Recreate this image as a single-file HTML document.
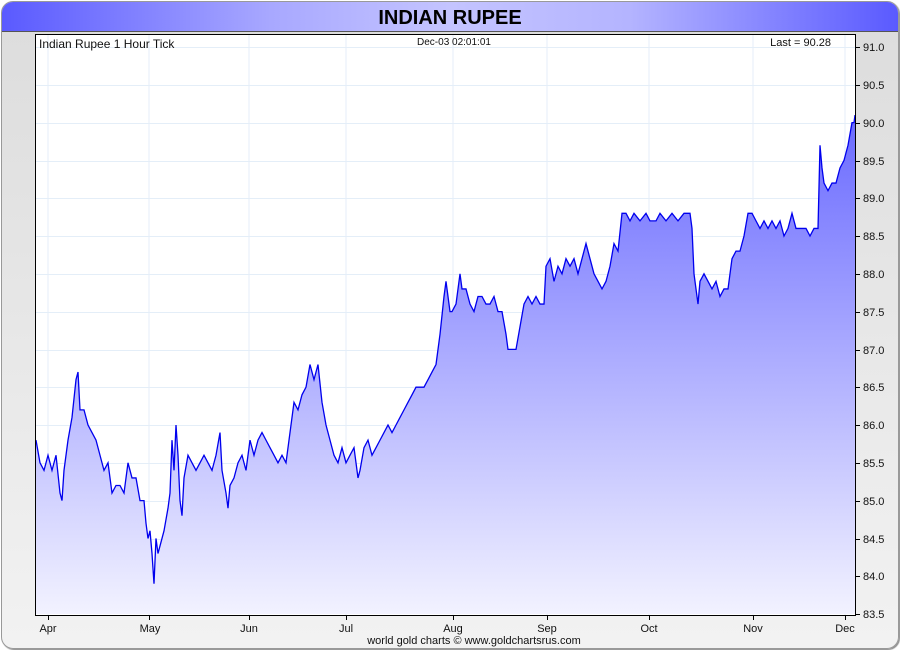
<!DOCTYPE html>
<html><head><meta charset="utf-8"><style>
html,body{margin:0;padding:0;width:900px;height:650px;overflow:hidden;background:#fff;font-family:"Liberation Sans",sans-serif}
.frame{position:absolute;left:1px;top:1px;width:896px;height:646px;border-radius:12px;background:linear-gradient(#dcdcdc,#f2f2f2);border:1px solid #999;box-shadow:1px 1px 1px #888;overflow:hidden}
.hdr{position:absolute;left:0;top:0;width:896px;height:29px;background:linear-gradient(90deg,#5a5aff 0%,#a8a8ff 30%,#c4c4ff 50%,#b4b4ff 70%,#5a5aff 100%);border-bottom:1px solid #555;text-align:center;font-weight:bold;font-size:20px;line-height:32px;color:#000}
svg{position:absolute;left:0;top:0}
</style></head><body>
<div class="frame"><div class="hdr">INDIAN RUPEE</div></div>
<svg width="900" height="650" font-family="Liberation Sans, sans-serif">
<defs><linearGradient id="g" x1="0" y1="0" x2="0" y2="1"><stop offset="0" stop-color="#f2f2ff"/><stop offset="1" stop-color="#6a6aff"/></linearGradient></defs>
<rect x="35.5" y="34.5" width="820" height="581" fill="#fff" stroke="#000"/>
<g stroke="#e4eef8" stroke-width="1">
<line x1="48" y1="35" x2="48" y2="615"/><line x1="149" y1="35" x2="149" y2="615"/><line x1="249" y1="35" x2="249" y2="615"/><line x1="346" y1="35" x2="346" y2="615"/><line x1="453" y1="35" x2="453" y2="615"/><line x1="547" y1="35" x2="547" y2="615"/><line x1="649" y1="35" x2="649" y2="615"/><line x1="753" y1="35" x2="753" y2="615"/><line x1="845" y1="35" x2="845" y2="615"/>
<line x1="36" y1="47.5" x2="855" y2="47.5"/><line x1="36" y1="85.5" x2="855" y2="85.5"/><line x1="36" y1="123.5" x2="855" y2="123.5"/><line x1="36" y1="161.5" x2="855" y2="161.5"/><line x1="36" y1="198.5" x2="855" y2="198.5"/><line x1="36" y1="236.5" x2="855" y2="236.5"/><line x1="36" y1="274.5" x2="855" y2="274.5"/><line x1="36" y1="312.5" x2="855" y2="312.5"/><line x1="36" y1="350.5" x2="855" y2="350.5"/><line x1="36" y1="387.5" x2="855" y2="387.5"/><line x1="36" y1="425.5" x2="855" y2="425.5"/><line x1="36" y1="463.5" x2="855" y2="463.5"/><line x1="36" y1="501.5" x2="855" y2="501.5"/><line x1="36" y1="539.5" x2="855" y2="539.5"/><line x1="36" y1="576.5" x2="855" y2="576.5"/>
</g>
<g transform="translate(0,47) scale(1,-75.6) translate(0,-91)">
<polyline fill="url(#g)" stroke="none" points="36,83.5 36,85.8 40,85.5 44,85.4 48,85.6 52,85.4 56,85.6 60,85.1 62,85.0 64,85.4 68,85.8 72,86.1 76,86.6 78,86.7 80,86.2 84,86.2 88,86.0 92,85.9 96,85.8 100,85.6 104,85.4 108,85.5 112,85.1 116,85.2 120,85.2 124,85.1 128,85.5 132,85.3 136,85.3 140,85.0 144,85.0 146,84.7 148,84.5 150,84.6 152,84.3 154,83.9 156,84.5 158,84.3 160,84.4 164,84.6 168,84.9 170,85.1 172,85.8 174,85.4 176,86.0 178,85.6 180,85.0 182,84.8 184,85.3 188,85.6 192,85.5 196,85.4 200,85.5 204,85.6 208,85.5 212,85.4 216,85.6 220,85.9 222,85.4 226,85.1 228,84.9 230,85.2 234,85.3 238,85.5 242,85.6 246,85.4 250,85.8 254,85.6 258,85.8 262,85.9 266,85.8 270,85.7 274,85.6 278,85.5 282,85.6 286,85.5 290,85.9 294,86.3 298,86.2 302,86.4 306,86.5 310,86.8 314,86.6 318,86.8 322,86.3 326,86.0 330,85.8 334,85.6 338,85.5 342,85.7 346,85.5 350,85.6 354,85.7 358,85.3 360,85.4 364,85.7 368,85.8 372,85.6 376,85.7 380,85.8 384,85.9 388,86.0 392,85.9 396,86.0 400,86.1 404,86.2 408,86.3 412,86.4 416,86.5 420,86.5 424,86.5 428,86.6 432,86.7 436,86.8 440,87.2 444,87.7 446,87.9 450,87.5 452,87.5 456,87.6 460,88.0 462,87.8 466,87.8 470,87.6 474,87.5 478,87.7 482,87.7 486,87.6 490,87.6 494,87.7 498,87.5 502,87.5 506,87.2 508,87.0 512,87.0 516,87.0 520,87.3 524,87.6 528,87.7 532,87.6 536,87.7 540,87.6 544,87.6 546,88.1 550,88.2 554,87.9 558,88.1 562,88.0 566,88.2 570,88.1 574,88.2 578,88.0 582,88.2 586,88.4 590,88.2 594,88.0 598,87.9 602,87.8 606,87.9 610,88.1 614,88.4 618,88.3 622,88.8 626,88.8 630,88.7 634,88.8 640,88.7 646,88.8 650,88.7 656,88.7 660,88.8 666,88.7 672,88.8 678,88.7 684,88.8 690,88.8 692,88.6 694,88.0 696,87.8 698,87.6 700,87.9 704,88.0 708,87.9 712,87.8 716,87.9 720,87.7 724,87.8 728,87.8 732,88.2 736,88.3 740,88.3 744,88.5 748,88.8 752,88.8 756,88.7 760,88.6 764,88.7 768,88.6 772,88.7 776,88.6 780,88.7 784,88.5 788,88.6 792,88.8 796,88.6 800,88.6 806,88.6 810,88.5 814,88.6 818,88.6 820,89.7 822,89.4 824,89.2 828,89.1 832,89.2 836,89.2 840,89.4 844,89.5 848,89.7 852,90.0 854,90.0 855,90.1 855,83.5"/>
<polyline fill="none" stroke="#0000ee" stroke-width="1.3" vector-effect="non-scaling-stroke" points="36,85.8 40,85.5 44,85.4 48,85.6 52,85.4 56,85.6 60,85.1 62,85.0 64,85.4 68,85.8 72,86.1 76,86.6 78,86.7 80,86.2 84,86.2 88,86.0 92,85.9 96,85.8 100,85.6 104,85.4 108,85.5 112,85.1 116,85.2 120,85.2 124,85.1 128,85.5 132,85.3 136,85.3 140,85.0 144,85.0 146,84.7 148,84.5 150,84.6 152,84.3 154,83.9 156,84.5 158,84.3 160,84.4 164,84.6 168,84.9 170,85.1 172,85.8 174,85.4 176,86.0 178,85.6 180,85.0 182,84.8 184,85.3 188,85.6 192,85.5 196,85.4 200,85.5 204,85.6 208,85.5 212,85.4 216,85.6 220,85.9 222,85.4 226,85.1 228,84.9 230,85.2 234,85.3 238,85.5 242,85.6 246,85.4 250,85.8 254,85.6 258,85.8 262,85.9 266,85.8 270,85.7 274,85.6 278,85.5 282,85.6 286,85.5 290,85.9 294,86.3 298,86.2 302,86.4 306,86.5 310,86.8 314,86.6 318,86.8 322,86.3 326,86.0 330,85.8 334,85.6 338,85.5 342,85.7 346,85.5 350,85.6 354,85.7 358,85.3 360,85.4 364,85.7 368,85.8 372,85.6 376,85.7 380,85.8 384,85.9 388,86.0 392,85.9 396,86.0 400,86.1 404,86.2 408,86.3 412,86.4 416,86.5 420,86.5 424,86.5 428,86.6 432,86.7 436,86.8 440,87.2 444,87.7 446,87.9 450,87.5 452,87.5 456,87.6 460,88.0 462,87.8 466,87.8 470,87.6 474,87.5 478,87.7 482,87.7 486,87.6 490,87.6 494,87.7 498,87.5 502,87.5 506,87.2 508,87.0 512,87.0 516,87.0 520,87.3 524,87.6 528,87.7 532,87.6 536,87.7 540,87.6 544,87.6 546,88.1 550,88.2 554,87.9 558,88.1 562,88.0 566,88.2 570,88.1 574,88.2 578,88.0 582,88.2 586,88.4 590,88.2 594,88.0 598,87.9 602,87.8 606,87.9 610,88.1 614,88.4 618,88.3 622,88.8 626,88.8 630,88.7 634,88.8 640,88.7 646,88.8 650,88.7 656,88.7 660,88.8 666,88.7 672,88.8 678,88.7 684,88.8 690,88.8 692,88.6 694,88.0 696,87.8 698,87.6 700,87.9 704,88.0 708,87.9 712,87.8 716,87.9 720,87.7 724,87.8 728,87.8 732,88.2 736,88.3 740,88.3 744,88.5 748,88.8 752,88.8 756,88.7 760,88.6 764,88.7 768,88.6 772,88.7 776,88.6 780,88.7 784,88.5 788,88.6 792,88.8 796,88.6 800,88.6 806,88.6 810,88.5 814,88.6 818,88.6 820,89.7 822,89.4 824,89.2 828,89.1 832,89.2 836,89.2 840,89.4 844,89.5 848,89.7 852,90.0 854,90.0 855,90.1"/>
</g>
<rect x="35.5" y="34.5" width="820" height="581" fill="none" stroke="#000"/>
<g stroke="#000"><line x1="855" y1="47.5" x2="860" y2="47.5"/><line x1="855" y1="85.5" x2="860" y2="85.5"/><line x1="855" y1="123.5" x2="860" y2="123.5"/><line x1="855" y1="161.5" x2="860" y2="161.5"/><line x1="855" y1="198.5" x2="860" y2="198.5"/><line x1="855" y1="236.5" x2="860" y2="236.5"/><line x1="855" y1="274.5" x2="860" y2="274.5"/><line x1="855" y1="312.5" x2="860" y2="312.5"/><line x1="855" y1="350.5" x2="860" y2="350.5"/><line x1="855" y1="387.5" x2="860" y2="387.5"/><line x1="855" y1="425.5" x2="860" y2="425.5"/><line x1="855" y1="463.5" x2="860" y2="463.5"/><line x1="855" y1="501.5" x2="860" y2="501.5"/><line x1="855" y1="539.5" x2="860" y2="539.5"/><line x1="855" y1="576.5" x2="860" y2="576.5"/><line x1="855" y1="614.5" x2="860" y2="614.5"/>
<line x1="48.5" y1="615" x2="48.5" y2="620"/><line x1="149.5" y1="615" x2="149.5" y2="620"/><line x1="249.5" y1="615" x2="249.5" y2="620"/><line x1="346.5" y1="615" x2="346.5" y2="620"/><line x1="453.5" y1="615" x2="453.5" y2="620"/><line x1="547.5" y1="615" x2="547.5" y2="620"/><line x1="649.5" y1="615" x2="649.5" y2="620"/><line x1="753.5" y1="615" x2="753.5" y2="620"/><line x1="845.5" y1="615" x2="845.5" y2="620"/></g>
<g font-size="11" fill="#111">
<text x="863" y="51">91.0</text><text x="863" y="89">90.5</text><text x="863" y="127">90.0</text><text x="863" y="165">89.5</text><text x="863" y="202">89.0</text><text x="863" y="240">88.5</text><text x="863" y="278">88.0</text><text x="863" y="316">87.5</text><text x="863" y="354">87.0</text><text x="863" y="391">86.5</text><text x="863" y="429">86.0</text><text x="863" y="467">85.5</text><text x="863" y="505">85.0</text><text x="863" y="543">84.5</text><text x="863" y="580">84.0</text><text x="863" y="618">83.5</text>
<text x="48" y="632" text-anchor="middle">Apr</text><text x="150" y="632" text-anchor="middle">May</text><text x="249" y="632" text-anchor="middle">Jun</text><text x="346" y="632" text-anchor="middle">Jul</text><text x="453" y="632" text-anchor="middle">Aug</text><text x="547" y="632" text-anchor="middle">Sep</text><text x="649" y="632" text-anchor="middle">Oct</text><text x="753" y="632" text-anchor="middle">Nov</text><text x="845" y="632" text-anchor="middle">Dec</text>
<text x="474" y="644" text-anchor="middle">world gold charts © www.goldchartsrus.com</text>
<text x="39" y="48" font-size="12">Indian Rupee 1 Hour Tick</text>
<text x="454" y="45" text-anchor="middle" font-size="10">Dec-03  02:01:01</text>
<text x="831" y="46" text-anchor="end" font-size="11">Last = 90.28</text>
</g>
</svg>
</body></html>
